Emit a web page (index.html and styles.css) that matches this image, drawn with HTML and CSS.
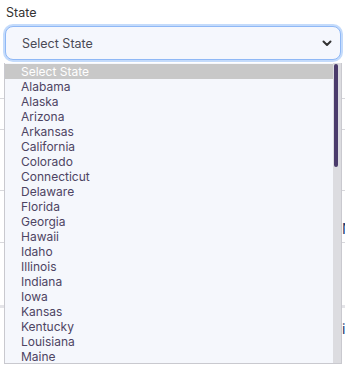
FILE: index.html
```html
<!DOCTYPE html>
<html lang="en">
<head>
    <meta charset="UTF-8">
    <meta name="viewport" content="width=device-width, initial-scale=1.0">
    <title>State</title>
    <link rel="stylesheet" href="styles.css">
</head>
<body>

    <!-- State field -->
    <div class="field">
        <label class="label">State</label>
        <div class="select-box">
            <span>Select State</span>
            <svg class="chevron" width="10" height="7" viewBox="0 0 10 7">
                <path d="M1.5 1.5 L5 5 L8.5 1.5" fill="none" stroke="#333" stroke-width="2" stroke-linecap="round" stroke-linejoin="round"/>
            </svg>
        </div>

        <!-- Open dropdown list -->
        <div class="dropdown">
            <ul class="options">
                <li class="selected">Select State</li>
                <li>Alabama</li>
                <li>Alaska</li>
                <li>Arizona</li>
                <li>Arkansas</li>
                <li>California</li>
                <li>Colorado</li>
                <li>Connecticut</li>
                <li>Delaware</li>
                <li>Florida</li>
                <li>Georgia</li>
                <li>Hawaii</li>
                <li>Idaho</li>
                <li>Illinois</li>
                <li>Indiana</li>
                <li>Iowa</li>
                <li>Kansas</li>
                <li>Kentucky</li>
                <li>Louisiana</li>
                <li>Maine</li>
            </ul>
            <div class="scrollbar"><div class="thumb"></div></div>
        </div>
    </div>

    <!-- Page content behind the list -->
    <div class="backdrop">
        <div class="row r1"></div>
        <div class="row r2"></div>
        <div class="row r3"><span class="name">N</span></div>
        <div class="row r4"><span class="name">is</span></div>
    </div>

</body>
</html>
```

FILE: styles.css
```css
body {
    font-family: Inter, "Noto Sans", sans-serif;
    background-color: #ffffff;
    margin: 0;
    padding: 0;
    width: 345px;
    height: 366px;
    overflow: hidden;
    position: relative;
}

.field {
    padding: 5px 4px 0 5px;
}

.label {
    display: block;
    font-size: 12.5px;
    color: #333;
    padding-left: 1px;
    line-height: 15px;
}

.select-box {
    margin-top: 6px;
    height: 32px;
    border: 1px solid #8fb8f6;
    box-shadow: 0 0 0 2px #c4dbfb;
    border-radius: 8px;
    background: #f5f7fd;
    display: flex;
    align-items: center;
    justify-content: space-between;
    padding: 0 8px 0 16px;
    font-size: 12.5px;
    color: #4a4a55;
}

.chevron {
    margin-top: 1px;
}

/* Native-looking open list */
.dropdown {
    position: absolute;
    top: 63px;
    left: 4px;
    width: 336px;
    height: 300px;
    background: #f5f7fc;
    border: 1px solid #c9c9cf;
    border-top: none;
    z-index: 2;
    display: flex;
}

.options {
    list-style: none;
    margin: 0;
    padding: 1px 0 0 0;
    flex: 1;
}

.options li {
    height: 15px;
    line-height: 15px;
    font-size: 12px;
    color: #4d4463;
    padding-left: 16px;
}

.options li.selected {
    background: #c8c8c8;
    color: #fff;
}

.scrollbar {
    width: 7px;
    background: #dcdce0;
    padding: 1px 0 0 1px;
}

.thumb {
    width: 4px;
    height: 103px;
    background: #4a3b6b;
    border-radius: 2px;
}

/* Content behind the dropdown */
.backdrop {
    margin-top: 2px;
}

.row {
    border-top: 1px solid #d8d8dc;
    font-size: 14px;
    line-height: 14px;
    color: #1a3a6e;
    padding-left: 342px;
    box-sizing: border-box;
    white-space: nowrap;
}

.r1 { height: 31px; margin-top: 38px; }
.r2 { height: 61px; }
.r3 { height: 53px; padding-top: 31px; border-bottom: 1px solid #d8d8dc; }
.r4 { height: 54px; margin-top: 62px; padding-top: 14px; border-top: 3px solid #e4e4e8; }
```
